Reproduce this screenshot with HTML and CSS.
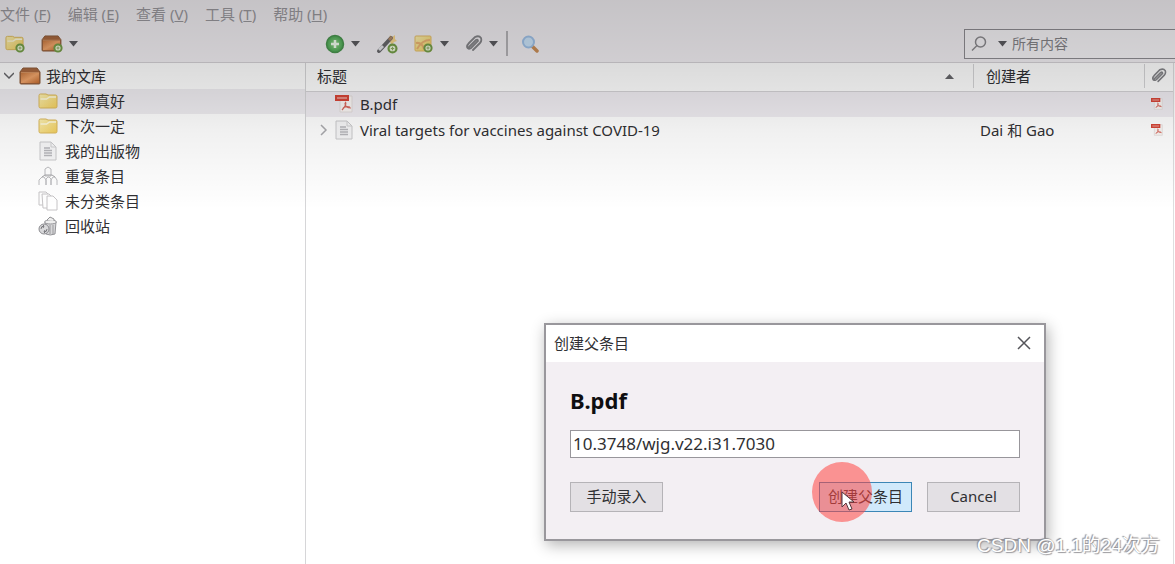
FILE: index.html
```html
<!DOCTYPE html>
<html lang="zh-CN">
<head>
<meta charset="utf-8">
<title>我的文库</title>
<link rel="stylesheet" href="styles.css">
</head>
<body>
<svg class="defs" aria-hidden="true">
  <defs>
    <linearGradient id="gold" x1="0" y1="0" x2="1" y2="1"><stop offset="0" stop-color="#fdf2b4"/><stop offset="1" stop-color="#f3cf5c"/></linearGradient>
    <linearGradient id="wood" x1="0" y1="0" x2="1" y2="1"><stop offset="0" stop-color="#c87840"/><stop offset=".5" stop-color="#f2a66c"/><stop offset="1" stop-color="#c56c30"/></linearGradient>
    <radialGradient id="green"><stop offset="0" stop-color="#94d98c"/><stop offset="1" stop-color="#48a552"/></radialGradient>
    <symbol id="plus" viewBox="0 0 10 10"><circle cx="5" cy="5" r="3.6" fill="#eef8dc" stroke="#759f48" stroke-width="2"/><path d="M5 3.5v3M3.5 5h3" stroke="#8eac64"/></symbol>
    <symbol id="folder" viewBox="0 0 20 16"><path d="M1 2.5Q1 1 2.500 1H8l2 1h7.500Q19 2 19 3.500V13.500Q19 15 17.500 15h-15Q1 15 1 13.500Z" fill="url(#gold)" stroke="#dcb95e"/><path d="M2.500 6h6l3-2H18" fill="none" stroke="#fffbe0" stroke-width="1.500"/></symbol>
    <symbol id="box" viewBox="0 0 22 18"><path d="M4 1h14l3 4v11q0 1-1 1H2q-1 0-1-1V5Z" fill="#a9683f" stroke="#8e5c3a"/><path d="M2 6h18v10H2Z" fill="url(#wood)"/><path d="M2 5.500h18" stroke="#d69463"/></symbol>
    <symbol id="page" viewBox="0 0 18 20"><path d="M1 1h11l5 5v13H1Z" fill="#f7f7f8" stroke="#cacacc"/><path d="M12 1v5h5" fill="none" stroke="#d0d0d2"/><path d="M5 7h6M5 9.500h8M5 12h8M5 14.500h8" stroke="#b8b8bc" stroke-width="1.500"/></symbol>
    <symbol id="pdf" viewBox="0 0 18 18"><path d="M4 1h13v16H5V6" fill="#fbf7f5" stroke="#e2dcdb"/><path d="M0 0h14v6H0Z" fill="#d64436"/><path d="M2 3h10" stroke="#eba59d" stroke-width="1.500"/><path d="M10 7c2 1 0 5-3 8m3-7c0 3 2 5 6 5M8 13q3-2 7-1" fill="none" stroke="#d9695e" stroke-width="1.200"/></symbol>
    <symbol id="clip" viewBox="0 0 18 18"><path d="m4 12 7-7q2-1 2 1l-7 7q-3 2-4-1 0-2 2-4l6-6q4-2 6 1 1 3-1 5l-7 7" fill="none" stroke="#858589" stroke-width="1.800" stroke-linecap="round"/></symbol>
    <symbol id="arrow" viewBox="0 0 9 6"><path d="M0 0h9L4.500 5.500Z" fill="#5c5b60"/></symbol>
  </defs>
</svg>

<div class="app">
  <nav class="menubar">
    <a href="#file">文件 (<u>F</u>)</a><a href="#edit">编辑 (<u>E</u>)</a><a href="#view">查看 (<u>V</u>)</a><a href="#tools">工具 (<u>T</u>)</a><a href="#help">帮助 (<u>H</u>)</a>
  </nav>

  <header class="toolbar">
    <div class="tools tools-left">
      <button class="tool" aria-label="新建分类"><svg width="20" height="18" viewBox="0 0 20 18"><use href="#folder" width="19" height="16"/><use href="#plus" x="10" y="8" width="10" height="10"/></svg></button>
      <button class="tool" aria-label="新建文库"><svg width="22" height="18" viewBox="0 0 22 18"><use href="#box" width="21" height="17"/><use href="#plus" x="12" y="8" width="10" height="10"/></svg><svg class="drop"><use href="#arrow"/></svg></button>
    </div>
    <div class="tools tools-main">
      <button class="tool" aria-label="新建条目"><svg width="20" height="20" viewBox="0 0 20 20"><circle cx="10" cy="10" r="8.500" fill="url(#green)" stroke="#4b9550" stroke-width="1.500"/><path d="M10 6v8M6 10h8" stroke="#f2fff0" stroke-width="2.500"/></svg><svg class="drop"><use href="#arrow"/></svg></button>
      <button class="tool" aria-label="通过标识符添加"><svg width="22" height="20" viewBox="0 0 22 20"><path d="m14 1 2 2 3-2v4l2 2-3 1-2 3-2-3-3-1 2-2Z" fill="#f9d88e"/><path d="M3 17 15 4" stroke="#68686c" stroke-width="4" stroke-linecap="round"/><path d="m3 16 4-4" stroke="#e5e5ea" stroke-width="3"/><path d="m13 6 3-3" stroke="#b18b6b" stroke-width="3"/><use href="#plus" x="11" y="9" width="11" height="11"/></svg></button>
      <button class="tool" aria-label="新建笔记"><svg width="20" height="18" viewBox="0 0 20 18"><path d="M2 1h14q1 0 1 1v14H2q-1 0-1-1V2q0-1 1-1Z" fill="url(#gold)" stroke="#e6bd66"/><path d="M3 14q5-9 13-9M2 8q6-1 8 6" fill="none" stroke="#edb473" stroke-width="2"/><use href="#plus" x="9" y="8" width="10" height="10"/></svg><svg class="drop"><use href="#arrow"/></svg></button>
      <button class="tool" aria-label="添加附件"><svg width="18" height="18"><use href="#clip"/></svg><svg class="drop"><use href="#arrow"/></svg></button>
      <span class="divider"></span>
      <button class="tool" aria-label="高级搜索"><svg width="18" height="18" viewBox="0 0 18 18"><path d="m11 11 5 5" stroke="#cb8f58" stroke-width="3.500" stroke-linecap="round"/><circle cx="7.500" cy="7" r="5.500" fill="#cce5fb" stroke="#a0c2e9" stroke-width="2"/></svg></button>
    </div>
    <label class="search"><svg width="16" height="16" viewBox="0 0 16 16"><circle cx="9.500" cy="6" r="5" fill="none" stroke="#8b8a8e" stroke-width="1.500"/><path d="m6 9.500-5 5" stroke="#8b8a8e" stroke-width="1.500"/></svg><svg class="drop"><use href="#arrow"/></svg><input type="search" placeholder="所有内容" aria-label="搜索"></label>
  </header>

  <div class="workspace">
    <aside class="sidebar">
      <ul class="tree">
        <li class="root"><svg width="10" height="8" viewBox="0 0 10 8"><path d="m0 1 5 5 5-5" fill="none" stroke="#66666a" stroke-width="1.500"/></svg><svg width="22" height="18"><use href="#box"/></svg><span>我的文库</span></li>
        <li class="selected"><svg width="20" height="16"><use href="#folder"/></svg><span>白嫖真好</span></li>
        <li><svg width="20" height="16"><use href="#folder"/></svg><span>下次一定</span></li>
        <li><svg width="20" height="20"><use href="#page"/></svg><span>我的出版物</span></li>
        <li><svg width="20" height="20" viewBox="0 0 20 20"><g fill="#fff" stroke="#bcbcbf"><path d="M7 10V3l3-2 3 2v7ZM1 19v-5l3-3h2l2 3v5M8 19v-6l2-2h1l2 2v6M13 19v-5l2-3h2l2 3v5"/></g><path d="M4 11l3-2h7l3 2" fill="none" stroke="#a7a7aa"/></svg><span>重复条目</span></li>
        <li><svg width="20" height="20" viewBox="0 0 20 20"><g fill="#fff" stroke="#c6c4c6"><path d="M1 1h7l3 3v10H1Z"/><path d="M4 3h7l3 3v11H5Z"/><path d="M9 5h6l4 4v10H9Z"/></g></svg><span>未分类条目</span></li>
        <li><svg width="20" height="20" viewBox="0 0 20 20"><path d="M7 6h11l-1 12q-5 2-9 0Z" fill="#d7d7d9" stroke="#949498"/><path d="M12 9v9M15 9v9" stroke="#9a9a9d"/><ellipse cx="12.500" cy="6" rx="6" ry="2" fill="#eee" stroke="#949498"/><path d="m9 4 3-3 4 2v2" fill="#eee" stroke="#929295"/><circle cx="6" cy="13" r="5" fill="#d9d9db" stroke="#8b8b8f"/><path d="M3 13q0-3 3-3l-1-1m1 1-1 2m4 1q0 3-3 3l1 1m-1-1 1-2" fill="none" stroke="#77777b"/></svg><span>回收站</span></li>
      </ul>
    </aside>
    <main class="items">
      <table>
        <thead><tr><th class="col-title"><div class="sort"><span>标题</span><svg width="9" height="5" viewBox="0 0 9 5"><path d="M0 5h9L4.500 0Z" fill="#66666a"/></svg></div></th><th class="col-creator"><div class="split">创建者</div></th><th class="col-clip" aria-label="附件"><div class="split"><svg width="16" height="16"><use href="#clip"/></svg></div></th></tr></thead>
        <tbody>
          <tr class="selected"><td><div class="item"><span class="twisty"></span><svg width="20" height="18"><use href="#pdf"/></svg><span>B.pdf</span></div></td><td></td><td class="file"><svg width="12" height="12"><use href="#pdf"/></svg></td></tr>
          <tr><td><div class="item"><span class="twisty"><svg width="8" height="12" viewBox="0 0 8 12"><path d="m1 1 5 5-5 5" fill="none" stroke="#aaaaae" stroke-width="1.500"/></svg></span><svg width="20" height="20"><use href="#page"/></svg><span>Viral targets for vaccines against COVID-19</span></div></td><td class="creator">Dai 和 Gao</td><td class="file"><svg width="12" height="12"><use href="#pdf"/></svg></td></tr>
        </tbody>
      </table>
    </main>
  </div>

  <section class="dialog" role="dialog" aria-labelledby="dialog-title">
    <div class="titlebar"><span id="dialog-title">创建父条目</span><button class="close" aria-label="关闭"><svg width="14" height="14" viewBox="0 0 14 14"><path d="m1 1 12 12M13 1 1 13" stroke="#55555a" stroke-width="1.500"/></svg></button></div>
    <form class="dialog-body">
      <label for="identifier">B.pdf</label>
      <input id="identifier" type="text" value="10.3748/wjg.v22.i31.7030">
      <div class="actions"><button type="button">手动录入</button><button type="button" class="primary">创建父条目<span class="pointer"><svg width="14" height="20" viewBox="0 0 14 20"><path d="M1 1v15l4-4 3 7 3-1-3-7h5Z" fill="#fff" stroke="#55363b"/></svg></span></button><button type="button">Cancel</button></div>
    </form>
  </section>
  <div class="watermark">CSDN @1.1的24次方</div>
</div>
</body>
</html>
```
FILE: styles.css
```css
* { box-sizing: border-box; }
body { margin: 0; background: #fff; color: #303033; font: 15px/24px "Noto Sans", "Noto Sans CJK SC", sans-serif; }
svg { display: block; flex: none; }
button, input { font: inherit; color: inherit; }
.defs { position: absolute; width: 0; height: 0; }
.app { position: relative; display: flex; flex-direction: column; min-height: 100vh; overflow: hidden; }
.app::after { content: ""; position: absolute; inset: 0 0 auto; height: 210px; pointer-events: none; background: linear-gradient(rgba(0,0,0,.19), rgba(0,0,0,.145) 60px, rgba(0,0,0,.11) 92px, rgba(0,0,0,.06) 130px, transparent); }

.menubar { display: flex; gap: 17px; padding: 2px 0 1px; background: #f3f0f4; }
.menubar a { color: #9b999e; text-decoration: none; white-space: nowrap; }
.toolbar { display: flex; align-items: center; height: 36px; padding-bottom: 2px; background: #f3f0f4; border-bottom: 1px solid #d5d2d6; }
.tools { display: flex; align-items: center; }
.tools-left { flex: 0 0 325px; gap: 16px; padding-left: 5px; }
.tools-main { flex: 1; gap: 16px; }
.tool { display: flex; align-items: center; gap: 6px; padding: 0; border: 0; background: none; }
.drop { width: 9px; height: 6px; }
.divider { width: 2px; height: 25px; margin: 0 -3px 0 -8px; background: #b5b3b7; }
.search { flex: 0 0 211px; min-width: 0; display: flex; align-items: center; gap: 11px; height: 30px; padding-left: 6px; border: 1px solid #8f8d92; border-right: 0; background: #f7f5f8; }
.search input { min-width: 0; flex: 1; margin-left: -6px; padding: 0; border: 0; outline: 0; background: none; font-size: 14px; }
.search input::placeholder { color: #858488; opacity: 1; }

.workspace { flex: 1; display: flex; }
.sidebar { flex: 0 0 306px; border-right: 1px solid #d6d6d8; }
.tree { margin: 0; padding: 1px 0 0; list-style: none; }
.tree li { display: flex; align-items: center; gap: 7px; height: 25px; padding: 0 0 2px 38px; }
.tree .root { gap: 5px; padding-left: 4px; }
.tree .selected { background: #efedf1; }
.items { flex: 1; border-right: 1px solid #dededf; margin-right: 1px; }
table { width: 100%; table-layout: fixed; border-collapse: collapse; }
th, td { padding: 0 0 1px; text-align: left; font-weight: 400; white-space: nowrap; }
th { height: 28px; border-bottom: 1px solid #d5d3d7; }
tr { height: 26px; }
.col-creator { width: 171px; }
.col-clip { width: 29px; }
.split { display: flex; align-items: center; height: 24px; padding-left: 12px; border-left: 1px solid #d5d5d7; }
.col-clip .split { padding-left: 6px; }
.sort { display: flex; align-items: center; justify-content: space-between; padding: 0 19px 0 11px; }
tbody .selected { background: #f0edf2; }
.item { display: flex; align-items: center; gap: 6px; padding-left: 14px; }
.twisty { width: 8px; }
.creator { padding-left: 7px; }
.file svg { margin-left: 7px; }

.dialog { position: absolute; left: 544px; top: 323px; width: 502px; border: 2px solid #99979c; background: #f3eff3; box-shadow: 2px 4px 14px rgba(0,0,0,.3); }
.titlebar { display: flex; align-items: center; justify-content: space-between; height: 37px; padding: 0 13px 2px 8px; background: #fff; }
.close { padding: 0; border: 0; background: none; }
.dialog-body { padding: 23px 24px 27px; }
.dialog label { display: block; color: #0e0e10; font-size: 22px; line-height: 30px; font-weight: 700; }
.dialog input { display: block; width: 100%; height: 28px; margin: 15px 0 24px; padding: 0 2px 1px; border: 1px solid #98969b; border-radius: 0; background: #fff; font-size: 17px; }
.actions { display: flex; gap: 15px; }
.actions button { position: relative; width: 93px; height: 30px; padding: 0 0 2px; border: 1px solid #b5b3b7; background: #e3e0e4; white-space: nowrap; }
.actions button:first-child { margin-right: auto; }
.actions .primary { border-color: #3b86b6; background: #d0e9fb; }
.pointer { position: absolute; left: -8px; top: -21px; display: grid; place-items: center; width: 60px; height: 60px; padding: 18px 0 0 12px; border-radius: 50%; background: rgba(255,70,65,.55); }
.watermark { position: absolute; right: 15px; bottom: 5px; color: #fff; font-family: "Liberation Sans", "Noto Sans CJK SC", sans-serif; font-size: 19px; line-height: 26px; text-shadow: -1px -1px 1px #8d8c90, 1px 1px 1px #99989c; }
```
